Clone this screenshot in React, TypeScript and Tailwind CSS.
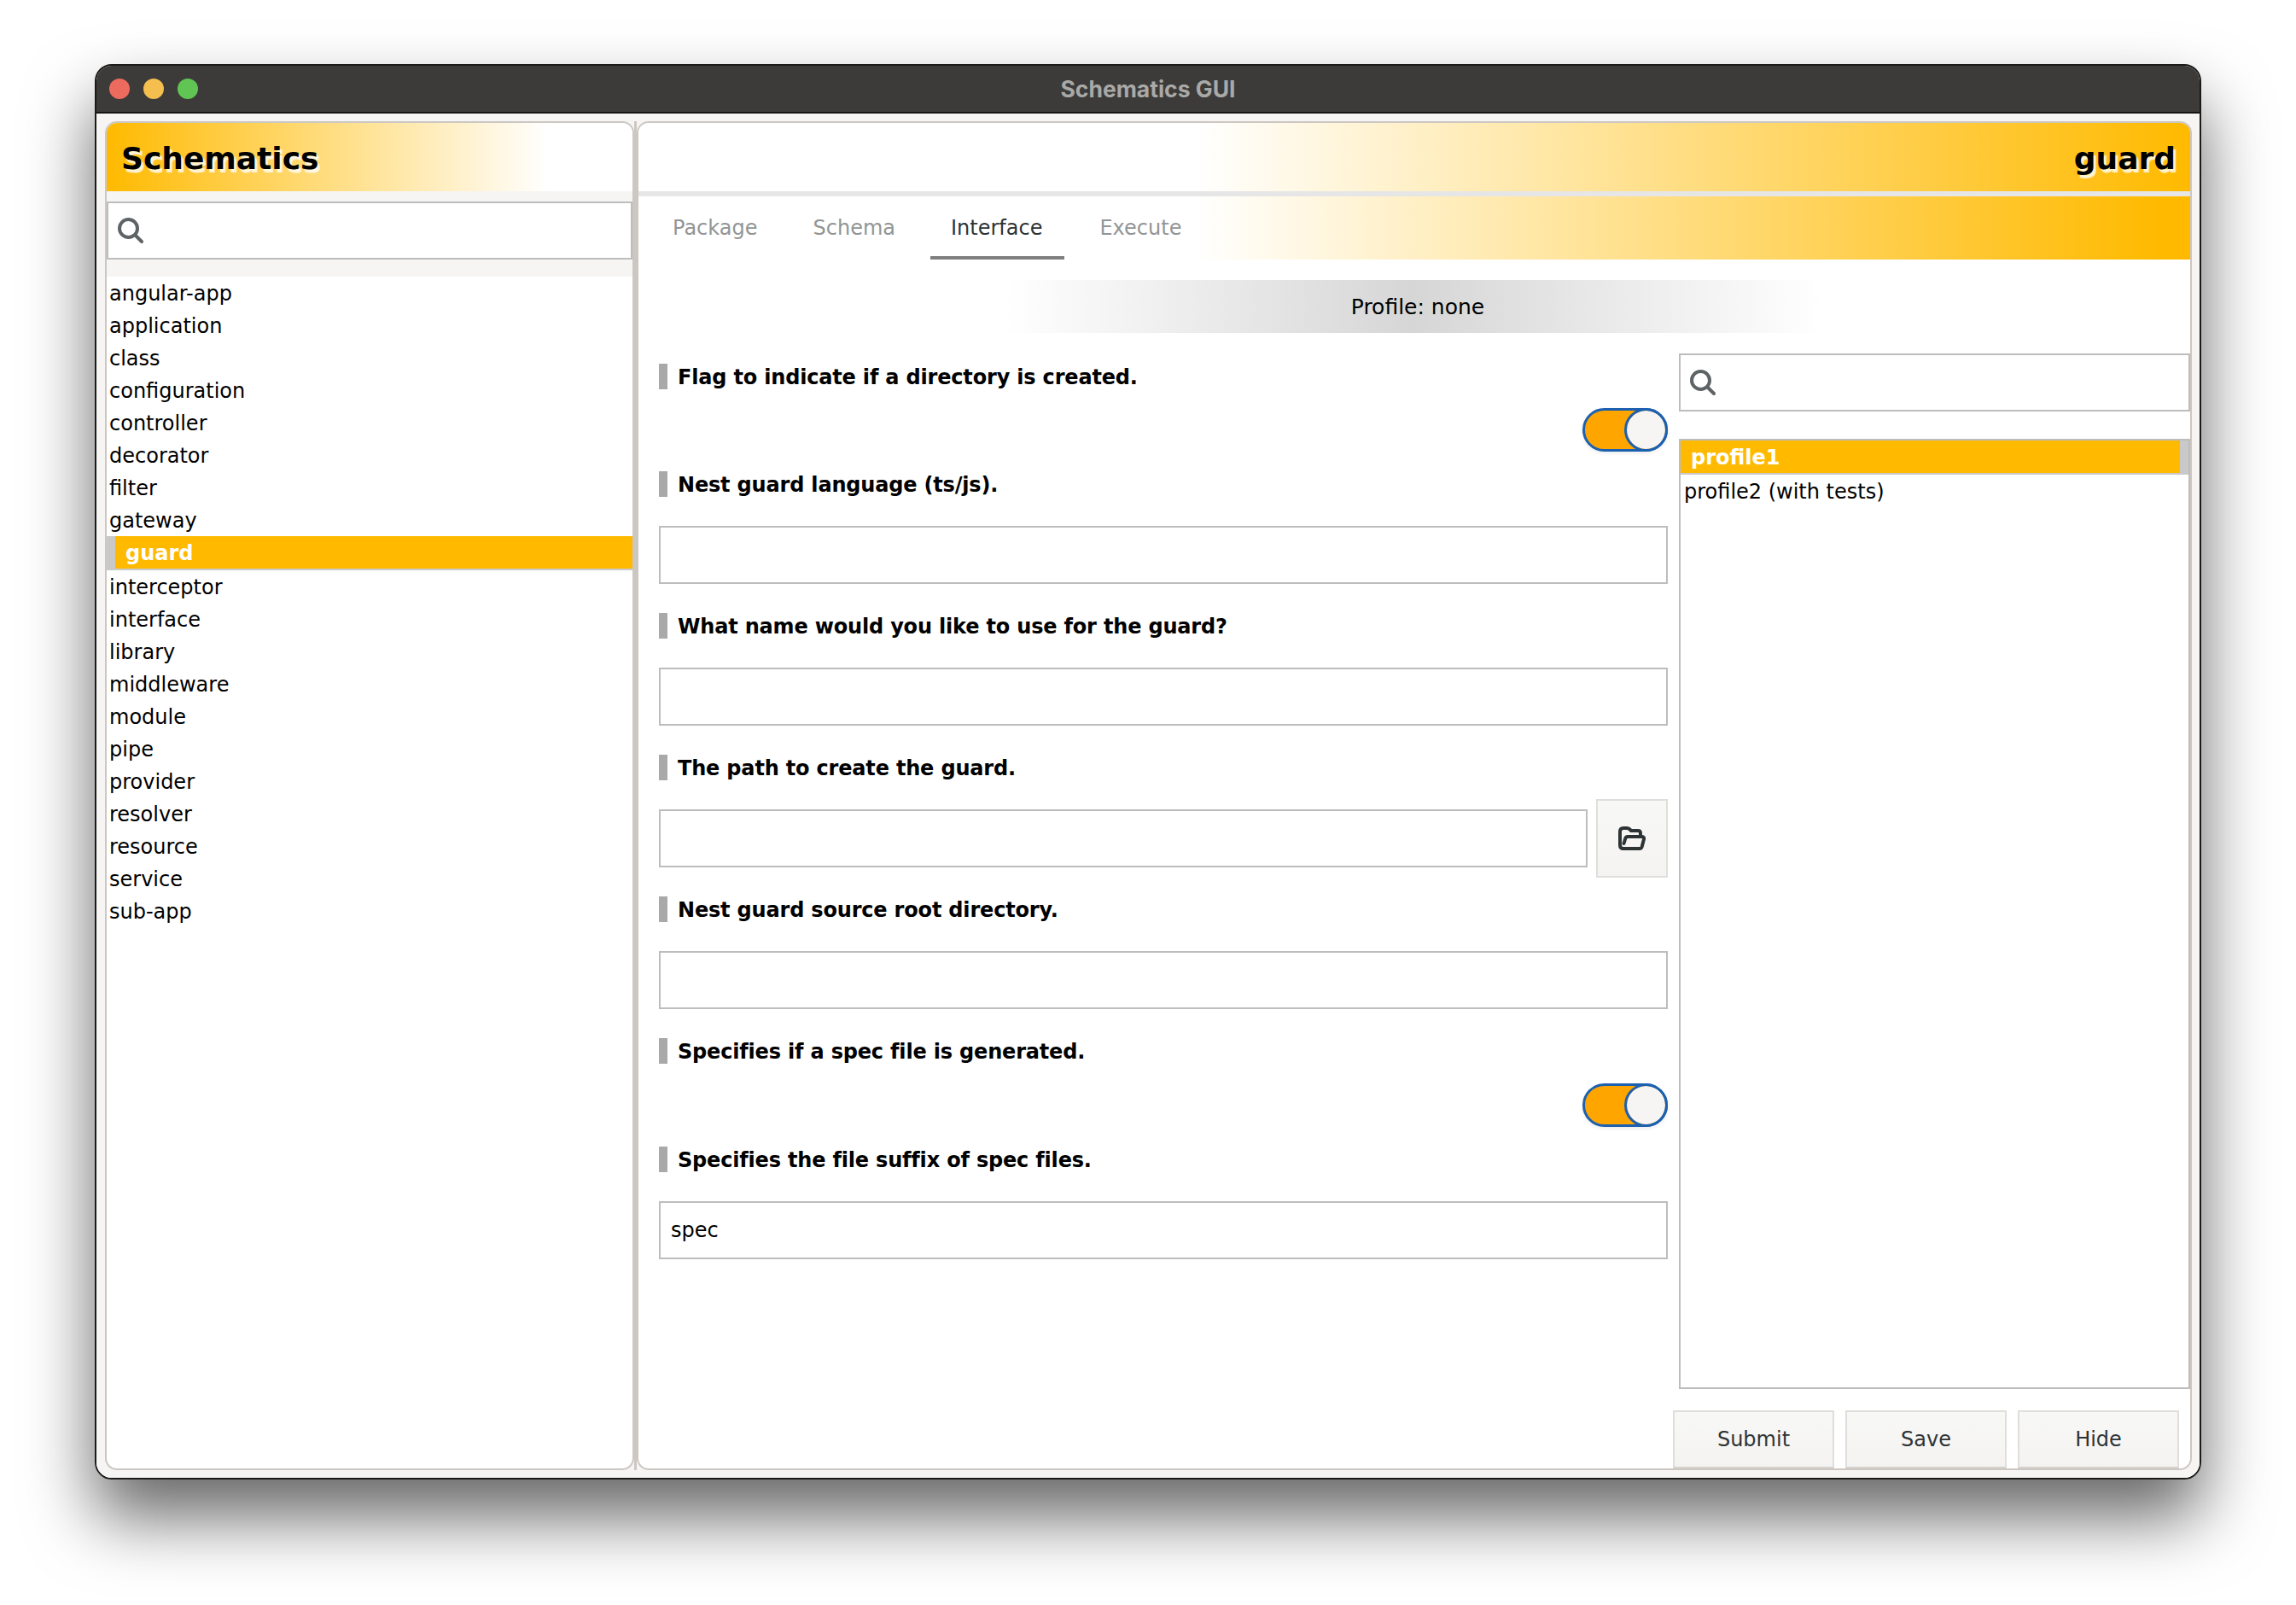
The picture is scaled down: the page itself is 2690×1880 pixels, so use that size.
const schematics = [
  "angular-app",
  "application",
  "class",
  "configuration",
  "controller",
  "decorator",
  "filter",
  "gateway",
  "guard",
  "interceptor",
  "interface",
  "library",
  "middleware",
  "module",
  "pipe",
  "provider",
  "resolver",
  "resource",
  "service",
  "sub-app",
];

const tabs = ["Package", "Schema", "Interface", "Execute"];

function SearchBox({ className }: { className: string }) {
  return (
    <div className={`flex items-center bg-white border-2 border-[#bdbdbd] ${className}`}>
      <svg width="30" height="30" viewBox="0 0 30 30" fill="none" stroke="#5e6366" strokeWidth="4" strokeLinecap="round">
        <circle cx="12.5" cy="12.5" r="10.5" />
        <line x1="20.5" y1="20.5" x2="28" y2="28" />
      </svg>
    </div>
  );
}

function FolderIcon() {
  return (
    <svg width="32" height="28" viewBox="0 0 32 28" fill="none" stroke="#2e3436" strokeWidth="4" strokeLinecap="round" strokeLinejoin="round">
      <path d="M6 26H25Q27 26 27.6 24L30 15Q30.5 12 28 12H11Q9 12 8.3 14L6.5 20" />
      <path d="M6 26Q2 26 2 22V6Q2 2 6 2H10Q12 2 13.5 3.5L15 5H23Q26 5 26 8V11" />
    </svg>
  );
}

function Label({ text }: { text: string }) {
  return (
    <div className="flex items-center h-[30px] gap-[12px]">
      <div className="w-[10px] h-[30px] bg-[#a9a9a9]" />
      <span className="font-bold text-black tracking-[-0.18px] pt-[2px]">{text}</span>
    </div>
  );
}

function Input({ value, className = "" }: { value?: string; className?: string }) {
  return (
    <div className={`h-[68px] bg-white border-2 border-[#bdbdbd] flex items-center px-[12px] text-black ${className}`}>
      {value}
    </div>
  );
}

function Toggle() {
  return (
    <div className="flex justify-end">
      <div className="w-[100px] h-[51px] rounded-full bg-[#ffa500] border-[3px] border-[#1c60b0] flex justify-end shadow-[0_2px_4px_rgba(0,0,0,0.08)]">
        <div className="w-[45px] h-[45px] rounded-full bg-[#f6f5f4] outline-[3px] outline-[#1c60b0]" />
      </div>
    </div>
  );
}

function ActionButton({ text }: { text: string }) {
  return (
    <div className="w-[189px] h-[68px] flex items-center justify-center bg-[linear-gradient(#f8f8f7,#f4f3f2)] border-2 border-[#e0dedb] border-b-[#d5d1cc] text-[#2e3436]">
      {text}
    </div>
  );
}

export default function App() {
  return (
    <div className="w-[2690px] h-[1880px] bg-white pt-[75px] pl-[111px] font-['DejaVu_Sans',sans-serif] text-[24px] leading-none">
      <div className="w-[2468px] h-[1658px] flex flex-col rounded-[20px] border-2 border-[#1a1a1a] overflow-hidden shadow-[0_44px_80px_rgba(0,0,0,0.6)]">
        {/* title bar */}
        <div className="relative h-[56px] shrink-0 bg-[#3c3b39] flex items-center justify-center border-b-2 border-[#151515]">
          <div className="absolute left-[15px] top-[15px] flex gap-[16px]">
            <div className="w-[24px] h-[24px] rounded-full bg-[#ed6a5e]" />
            <div className="w-[24px] h-[24px] rounded-full bg-[#f4bf4f]" />
            <div className="w-[24px] h-[24px] rounded-full bg-[#61c554]" />
          </div>
          <span className="font-['Inter',sans-serif] font-bold text-[#a9a9a7] text-[26.5px]">Schematics GUI</span>
        </div>

        <div className="flex-1 min-h-0 flex bg-[#f6f5f4] pl-[10px] pr-[9px] pt-[9px] pb-[9px]">
          {/* schematics list */}
          <div className="w-[620px] shrink-0 flex flex-col bg-white border-2 border-[#cdc7c2] rounded-[14px] overflow-hidden">
            <div className="h-[80px] shrink-0 flex items-center pl-[17px] pt-[3px] bg-[linear-gradient(to_right,#ffba00,#ffffff_84%)]">
              <span className="font-bold text-[36px] text-black [text-shadow:3px_4px_1px_rgba(255,255,255,0.8)]">Schematics</span>
            </div>
            <div className="h-[100px] shrink-0 bg-[#f6f5f4] pt-[12px]">
              <SearchBox className="h-[68px] pl-[11px]" />
            </div>
            <div className="flex-1 flex flex-col">
              {schematics.map((name) =>
                name === "guard" ? (
                  <div key={name} className="h-[40px] shrink-0 bg-[#ffba00] border-l-[10px] border-b-2 border-[#c9c9c9] pl-[12px] pt-[2px] flex items-center font-bold text-white">
                    {name}
                  </div>
                ) : (
                  <div key={name} className="h-[38px] shrink-0 pl-[3px] pt-[2px] flex items-center text-black">
                    {name}
                  </div>
                )
              )}
            </div>
          </div>

          <div className="w-[3px] shrink-0 bg-[#cdc7c2]" />

          {/* schematic detail */}
          <div className="flex-1 min-w-0 flex flex-col bg-white border-2 border-[#cdc7c2] rounded-[14px] overflow-hidden">
            <div className="h-[80px] shrink-0 flex items-center justify-end pr-[17px] pt-[3px] bg-[linear-gradient(to_left,#ffba00,#ffffff_64%)]">
              <span className="font-bold text-[36px] text-black [text-shadow:3px_4px_1px_rgba(255,255,255,0.8)]">guard</span>
            </div>
            <div className="h-[6px] shrink-0 bg-[#e6e6e6]" />
            <div className="h-[74px] shrink-0 flex gap-[17px] pl-[16px] bg-[linear-gradient(to_left,#ffba00_2%,#ffffff_64%)]">
              {tabs.map((tab) =>
                tab === "Interface" ? (
                  <div key={tab} className="pl-[24px] pr-[26px] pt-[4px] flex items-center border-b-4 border-[#7f7f7f] text-[#2e3436]">
                    {tab}
                  </div>
                ) : (
                  <div key={tab} className="px-[24px] flex items-center text-[#929595]">
                    {tab}
                  </div>
                )
              )}
            </div>

            <div className="flex-1 min-h-0 flex flex-col">
              <div className="mt-[24px] h-[62px] shrink-0 ml-[429px] w-[958px] flex items-center justify-center pl-[10px] text-[25px] text-black bg-[linear-gradient(to_right,#ffffff,#d6d6d6_50%,#ffffff)]">
                Profile: none
              </div>

              <div className="flex-1 min-h-0 flex pl-[24px] pt-[24px]">
                {/* form */}
                <div className="w-[1182px] shrink-0 flex flex-col pt-[12px]">
                  <Label text="Flag to indicate if a directory is created." />
                  <div className="mt-[22px]">
                    <Toggle />
                  </div>
                  <div className="mt-[23px]">
                    <Label text="Nest guard language (ts/js)." />
                  </div>
                  <Input className="mt-[34px]" />
                  <div className="mt-[34px]">
                    <Label text="What name would you like to use for the guard?" />
                  </div>
                  <Input className="mt-[34px]" />
                  <div className="mt-[34px]">
                    <Label text="The path to create the guard." />
                  </div>
                  <div className="mt-[22px] h-[92px] flex items-center gap-[10px]">
                    <Input className="w-[1088px]" />
                    <div className="w-[84px] h-[92px] flex items-center justify-center bg-[linear-gradient(#f8f8f7,#f4f3f2)] border-2 border-[#e0dedb]">
                      <FolderIcon />
                    </div>
                  </div>
                  <div className="mt-[22px]">
                    <Label text="Nest guard source root directory." />
                  </div>
                  <Input className="mt-[34px]" />
                  <div className="mt-[34px]">
                    <Label text="Specifies if a spec file is generated." />
                  </div>
                  <div className="mt-[23px]">
                    <Toggle />
                  </div>
                  <div className="mt-[23px]">
                    <Label text="Specifies the file suffix of spec files." />
                  </div>
                  <Input className="mt-[34px]" value="spec" />
                </div>

                {/* profiles */}
                <div className="flex-1 min-w-0 flex flex-col ml-[13px]">
                  <SearchBox className="h-[68px] pl-[11px] shrink-0" />
                  <div className="mt-[32px] h-[1113px] shrink-0 bg-white border-2 border-[#bdbdbd]">
                    <div className="h-[40px] bg-[#ffba00] border-r-[10px] border-b-2 border-[#c9c9c9] pl-[12px] pt-[2px] flex items-center font-bold text-white">
                      profile1
                    </div>
                    <div className="h-[40px] pl-[4px] flex items-center text-black">profile2 (with tests)</div>
                  </div>
                  <div className="mt-[25px] flex gap-[13px] -ml-[7px] pr-[13px] flex-1 items-end">
                    <ActionButton text="Submit" />
                    <ActionButton text="Save" />
                    <ActionButton text="Hide" />
                  </div>
                </div>
              </div>
            </div>
          </div>
        </div>
      </div>
    </div>
  );
}
